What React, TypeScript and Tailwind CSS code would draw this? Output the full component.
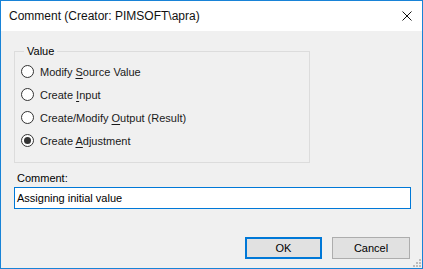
import React from "react";

const options = [
  { pre: "Modify ", key: "S", post: "ource Value" },
  { pre: "Create ", key: "I", post: "nput" },
  { pre: "Create/Modify ", key: "O", post: "utput (Result)" },
  { pre: "Create ", key: "A", post: "djustment" },
];

const Radio = ({ checked }: { checked?: boolean }) => (
  <span className="w-[13px] h-[13px] rounded-full border border-[#333333] bg-white flex items-center justify-center shrink-0">
    {checked && <span className="w-[7px] h-[7px] rounded-full bg-[#333333]" />}
  </span>
);

export default function App() {
  return (
    <div
      className="w-[423px] h-[269px] border border-[#1883d7] flex flex-col text-[11px] text-black"
      style={{ fontFamily: '"Liberation Sans", Arial, sans-serif' }}
    >
      {/* Title bar */}
      <div className="h-[30px] bg-white flex items-center justify-between pl-[8px] pr-[10px] shrink-0">
        <span className="text-[12px] text-[#111]">Comment (Creator: PIMSOFT\apra)</span>
        <svg width="10" height="10" viewBox="0 0 10 10">
          <path d="M0.5 0.5 L9.5 9.5 M9.5 0.5 L0.5 9.5" stroke="#111" strokeWidth="1" />
        </svg>
      </div>

      {/* Body */}
      <div className="flex-1 bg-[#f0f0f0] pl-[13px] pr-[11px] flex flex-col relative">
        <fieldset className="mt-[12px] w-[296px] h-[120px] border border-[#dcdcdc] pl-[6px] pt-[6px]">
          <legend className="ml-[3px] px-[3px] leading-[16px]">Value</legend>
          <div className="flex flex-col gap-[10px]">
            {options.map((o, i) => (
              <label key={i} className="flex items-center gap-[6px] h-[13px]">
                <Radio checked={i === 3} />
                <span className="leading-[16px] text-[#1a1a1a]">
                  {o.pre}
                  <span className="underline underline-offset-2">{o.key}</span>
                  {o.post}
                </span>
              </label>
            ))}
          </div>
        </fieldset>

        <div className="mt-[7px] pl-[3px] leading-[16px]">Comment:</div>
        <div className="mt-[1px] h-[22px] border border-[#0078d7] bg-white flex items-center px-[2px]">
          Assigning initial value
        </div>

        <div className="mt-[28px] flex justify-end gap-[10px] pr-[1px]">
          <button className="w-[77px] h-[22px] bg-[#e1e1e1] border-2 border-[#0078d7] text-[11px]">
            OK
          </button>
          <button className="w-[78px] h-[22px] bg-[#e1e1e1] border border-[#adadad] text-[11px]">
            Cancel
          </button>
        </div>

        {/* size grip */}
        <svg className="absolute right-[1px] bottom-[1px]" width="10" height="10" viewBox="0 0 10 10">
          {[
            [8, 2], [8, 5], [8, 8], [5, 5], [5, 8], [2, 8],
          ].map(([x, y], i) => (
            <rect key={i} x={x} y={y} width="2" height="2" fill="#bcbcbc" />
          ))}
        </svg>
      </div>
    </div>
  );
}
